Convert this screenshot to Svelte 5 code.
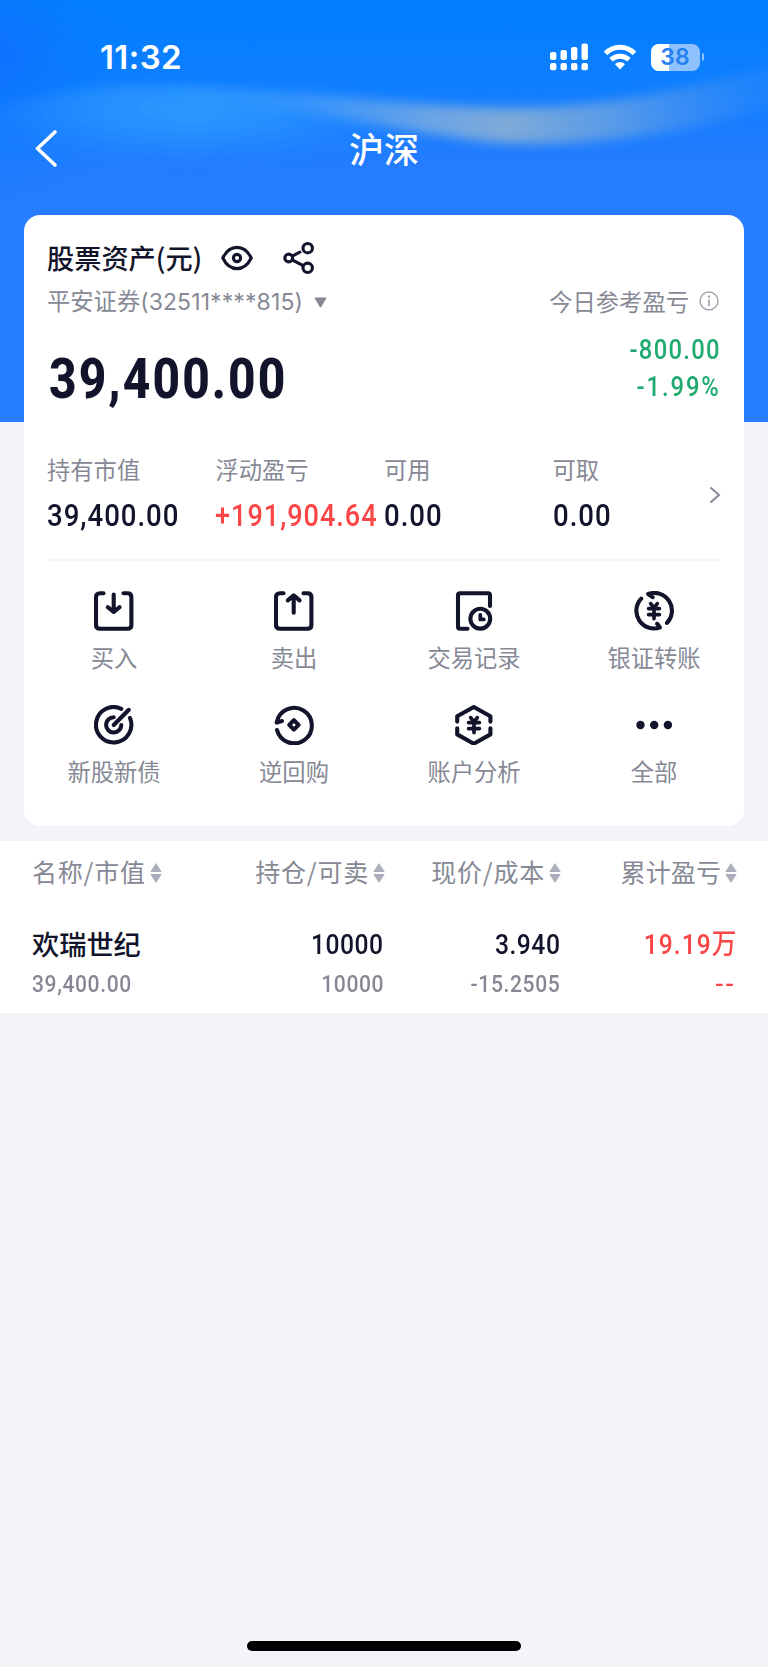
<script lang="ts">
  interface Stat {
    label: string
    value: string
    up?: boolean
  }

  const stats: Stat[] = [
    { label: '持有市值', value: '39,400.00' },
    { label: '浮动盈亏', value: '+191,904.64', up: true },
    { label: '可用', value: '0.00' },
    { label: '可取', value: '0.00' },
  ]

  const actions = [
    { icon: 'buy', label: '买入' },
    { icon: 'sell', label: '卖出' },
    { icon: 'records', label: '交易记录' },
    { icon: 'transfer', label: '银证转账' },
    { icon: 'ipo', label: '新股新债' },
    { icon: 'repo', label: '逆回购' },
    { icon: 'analysis', label: '账户分析' },
    { icon: 'more', label: '全部' },
  ]

  const columns = ['名称/市值', '持仓/可卖', '现价/成本', '累计盈亏']

  const holdings = [
    {
      name: '欢瑞世纪',
      marketValue: '39,400.00',
      position: '10000',
      sellable: '10000',
      price: '3.940',
      cost: '-15.2505',
      profit: '19.19',
      unit: '万',
      profitRate: '--',
    },
  ]

  const battery = 38
</script>

{#snippet yuan()}
  <path class="thin" d="M16.7 12.6L20 17L23.3 12.6M14.6 17.6H25.4M14.6 23.6H25.4M20 17V27.6" />
{/snippet}

<div class="page">
  <header class="hero">
    <!-- Soft light wave behind the nav bar -->
    <svg class="wave" width="768" height="422" viewBox="0 0 768 422">
      <defs>
        <linearGradient id="base" x1="0" y1="0" x2="0" y2="1">
          <stop offset="0" stop-color="#007fff" />
          <stop offset="0.2" stop-color="#0e7eff" />
          <stop offset="0.4" stop-color="#257cff" />
          <stop offset="1" stop-color="#277dff" />
        </linearGradient>
        <radialGradient id="corner" gradientUnits="userSpaceOnUse" cx="0" cy="55" r="150">
          <stop offset="0" stop-color="#0f70ff" stop-opacity="0.9" />
          <stop offset="1" stop-color="#057eff" stop-opacity="0" />
        </radialGradient>
        <radialGradient id="glow" gradientUnits="userSpaceOnUse" cx="0" cy="0" r="1" gradientTransform="translate(190 108) scale(250 66)">
          <stop offset="0" stop-color="#2e9aff" />
          <stop offset="0.4" stop-color="#2893ff" stop-opacity="0.8" />
          <stop offset="1" stop-color="#1e82ff" stop-opacity="0" />
        </radialGradient>
        <linearGradient id="band" gradientUnits="userSpaceOnUse" x1="150" y1="0" x2="768" y2="0">
          <stop offset="0" stop-color="#2f9cff" stop-opacity="0" />
          <stop offset="0.25" stop-color="#429bfb" stop-opacity="0.75" />
          <stop offset="0.45" stop-color="#6aa4e6" />
          <stop offset="0.58" stop-color="#7eaad8" />
          <stop offset="0.75" stop-color="#5f9ee6" stop-opacity="0.9" />
          <stop offset="1" stop-color="#2d89fa" stop-opacity="0.4" />
        </linearGradient>
        <filter id="blur" x="-20%" y="-50%" width="140%" height="200%"><feGaussianBlur stdDeviation="5.5" /></filter>
      </defs>
      <rect width="768" height="422" fill="url(#base)" />
      <rect width="160" height="210" fill="url(#corner)" />
      <path d="M-30 116C50 88 120 82 190 86C270 92 350 118 450 146V200H-30Z" fill="url(#glow)" filter="url(#blur)" />
      <path d="M150 88C280 82 370 106 510 108C610 108 690 88 790 62V98C710 130 590 150 490 142C370 128 270 100 150 92Z" fill="url(#band)" filter="url(#blur)" />
    </svg>

    <div class="status-bar">
      <span class="clock">11:32</span>
      <div class="status-icons">
        <svg width="38" height="28" viewBox="0 0 38 28" fill="#fff">
          <rect x="0" y="9" width="6.4" height="8" rx="2" />
          <rect x="10.5" y="7" width="6.4" height="10" rx="2" />
          <rect x="21" y="4" width="6.4" height="13" rx="2" />
          <rect x="31.5" y="0.5" width="6.4" height="16.5" rx="2" />
          <rect x="0" y="20" width="6.4" height="7.2" rx="2" />
          <rect x="10.5" y="20" width="6.4" height="7.2" rx="2" />
          <rect x="21" y="20" width="6.4" height="7.2" rx="2" />
          <rect x="31.5" y="20" width="6.4" height="7.2" rx="2" />
        </svg>
        <svg class="wifi" width="32" height="26" viewBox="0 0 32 26" fill="none" stroke="#fff" stroke-width="5">
          <path d="M1.6 9.4C9.6 1.2 22.4 1.2 30.4 9.4" />
          <path d="M7 15.8C12.2 10.9 19.8 10.9 25 15.8" />
          <path d="M11 20.2C13.8 17.2 18.2 17.2 21 20.2L16 25.6Z" fill="#fff" stroke="none" />
        </svg>
        <div class="battery">
          <div class="battery-body">
            <div class="battery-level" style="width: {battery}%"></div>
            <span class="battery-text">{battery}</span>
          </div>
          <div class="battery-cap"></div>
        </div>
      </div>
    </div>

    <nav class="nav">
      <button class="back" type="button" aria-label="返回">
        <svg width="24" height="38" viewBox="0 0 24 38" fill="none" stroke="#fff" stroke-width="3.6" stroke-linecap="round" stroke-linejoin="round">
          <polyline points="21 3 3.5 19.5 21 36" />
        </svg>
      </button>
      <h1>沪深</h1>
      <span class="nav-space"></span>
    </nav>
  </header>

  <section class="card">
    <div class="asset-title">
      <span>股票资产(元)</span>
      <svg class="eye" width="32" height="26" viewBox="0 0 32 26" fill="none" stroke="currentColor" stroke-width="3.1">
        <path d="M1.8 13C5.2 6 10.2 2.4 16 2.4S26.8 6 30.2 13C26.8 20 21.8 23.6 16 23.6S5.2 20 1.8 13Z" stroke-linejoin="round" />
        <circle cx="16" cy="13" r="3.6" />
      </svg>
      <svg class="share" width="32" height="34" viewBox="0 0 32 34" fill="none" stroke="currentColor" stroke-width="3.1">
        <circle cx="5.7" cy="17" r="3.9" />
        <circle cx="24.7" cy="7.2" r="4.7" />
        <circle cx="24.7" cy="26.8" r="4.7" />
        <path d="M9.2 15.2L18 10.5M9.2 18.9L20.6 24.9" />
      </svg>
    </div>

    <div class="account-row">
      <span>平安证券<span class="account-no">(32511****815)</span></span>
      <svg class="caret" width="13" height="11" viewBox="0 0 13 11" fill="currentColor">
        <path d="M1.2 0.5H11.8Q12.6 0.6 12.2 1.5L7.2 10Q6.5 10.8 5.8 10L0.8 1.5Q0.4 0.6 1.2 0.5Z" />
      </svg>
      <span class="today-label">今日参考盈亏</span>
      <svg class="info" width="20" height="20" viewBox="0 0 20 20" fill="none" stroke="currentColor" stroke-width="1.4">
        <circle cx="10" cy="10" r="9" />
        <path d="M10 8.5V15" stroke-width="1.8" />
        <circle cx="10" cy="5.6" r="1.2" fill="currentColor" stroke="none" />
      </svg>
    </div>

    <div class="total-row">
      <span class="total">39,400.00</span>
      <div class="today">
        <span>-800.00</span>
        <span class="rate">-1.99%</span>
      </div>
    </div>

    <div class="stats">
      {#each stats as stat}
        <div class="stat">
          <span class="stat-label">{stat.label}</span>
          <span class="stat-value" class:up={stat.up}>{stat.value}</span>
        </div>
      {/each}
      <svg class="chevron" width="12" height="18" viewBox="0 0 12 18" fill="none" stroke="currentColor" stroke-width="2">
        <polyline points="1.5 1.5 10 9 1.5 16.5" />
      </svg>
    </div>

    <div class="actions">
      {#each actions as action}
        <div class="action">
          <svg width="40" height="40" viewBox="0 0 40 40" fill="none" stroke="currentColor" stroke-width="4.1" stroke-linecap="round" stroke-linejoin="round">
            {#if action.icon === 'buy'}
              <path d="M9.5 2.2H6Q2 2.2 2 6V34Q2 37.7 6 37.7H33.5Q37.4 37.7 37.4 34V6Q37.4 2.2 33.5 2.2H29.5" />
              <path d="M19.7 3.5V21M13.8 16.2L19.7 21L25.6 16.2" />
            {:else if action.icon === 'sell'}
              <path d="M9.5 2.2H6Q2 2.2 2 6V34Q2 37.7 6 37.7H33.5Q37.4 37.7 37.4 34V6Q37.4 2.2 33.5 2.2H29.5" />
              <path d="M19.7 4.5V21.8M13.8 9.4L19.7 4.4L25.6 9.4" />
            {:else if action.icon === 'records'}
              <path d="M36 15V4.2Q36 2.2 34 2.2H6Q4 2.2 4 4.2V35.7Q4 37.7 6 37.7H13.5" />
              <circle cx="26.3" cy="27.7" r="9.9" />
              <path class="thin" d="M26.3 23.8V28.4H29.8" />
            {:else if action.icon === 'transfer'}
              <path d="M7.2 7.6A17.7 17.7 0 0 0 25.8 36.5L23.2 32.8" />
              <path d="M33 31.9A17.7 17.7 0 0 0 14.2 3L18.6 6.2" />
              {@render yuan()}
            {:else if action.icon === 'ipo'}
              <path d="M27.3 3.8A17.7 17.7 0 1 0 36 13" />
              <path d="M19.7 12.3A7.6 7.6 0 1 0 27.3 20" />
              <path d="M19.7 20L34.8 4.8" />
            {:else if action.icon === 'repo'}
              <path d="M3 25A17.7 17.7 0 1 0 2.7 17.6L8 16" />
              <path d="M19.9 15.2L24.6 19.9L19.9 24.6L15.2 19.9Z" />
            {:else if action.icon === 'analysis'}
              <path d="M3.2 16.6V11.3L19.8 2L36.4 11.3V16.6M3.2 23.2V29.4L19.8 38.7L36.4 29.4V23.2" />
              {@render yuan()}
            {:else}
              <g fill="currentColor" stroke="none">
                <circle cx="6.5" cy="20" r="4.2" />
                <circle cx="20.2" cy="20" r="4.2" />
                <circle cx="33.9" cy="20" r="4.2" />
              </g>
            {/if}
          </svg>
          <span>{action.label}</span>
        </div>
      {/each}
    </div>
  </section>

  <section class="holdings">
    <div class="row head">
      {#each columns as column}
        <span class="cell">
          {column}
          <svg class="sort" width="12" height="20" viewBox="0 0 12 20" fill="currentColor">
            <path d="M6 0L11.8 9H0.2ZM6 20L11.8 11H0.2Z" />
          </svg>
        </span>
      {/each}
    </div>
    {#each holdings as item}
      <div class="row body">
        <div class="cell stack">
          <span class="name">{item.name}</span>
          <span class="sub">{item.marketValue}</span>
        </div>
        <div class="cell stack">
          <span class="main">{item.position}</span>
          <span class="sub">{item.sellable}</span>
        </div>
        <div class="cell stack">
          <span class="main">{item.price}</span>
          <span class="sub">{item.cost}</span>
        </div>
        <div class="cell stack up">
          <span class="main profit">{item.profit}<span class="unit">{item.unit}</span></span>
          <span class="sub rate">{item.profitRate}</span>
        </div>
      </div>
    {/each}
  </section>

  <div class="home-indicator"></div>
</div>

<style>
  :global(body) {
    background: #f3f4f9;
  }

  .page {
    --ink: #11142a;
    --muted: #868995;
    --red: #fa4646;
    --green: #20aa70;
    --num: Roboto, 'Liberation Sans', sans-serif;
    display: flex;
    flex-direction: column;
    width: 768px;
    height: 1667px;
    overflow: hidden;
    color: var(--ink);
    background: #f3f4f9;
    font-family: 'Noto Sans CJK SC', sans-serif;
  }

  .hero {
    position: relative;
    flex-shrink: 0;
    height: 422px;
    color: #fff;
  }

  /* Decorative layer under the header content */
  .wave {
    position: absolute;
    inset: 0;
  }

  .status-bar {
    position: relative;
    display: flex;
    align-items: center;
    justify-content: space-between;
    padding: 39px 65px 0 100px;
    height: 36px;
  }

  .clock {
    font: 600 33px/36px Inter, sans-serif;
    letter-spacing: 0.4px;
  }

  .status-icons {
    display: flex;
    align-items: center;
    margin-right: -1px;
  }

  .wifi {
    margin-left: 16px;
  }

  .battery {
    display: flex;
    align-items: center;
    gap: 2px;
    margin-left: 15px;
  }

  .battery-body {
    position: relative;
    width: 49px;
    height: 27px;
    border-radius: 8px;
    overflow: hidden;
    background: #8fc1ff;
  }

  .battery-level {
    height: 100%;
    background: #fff;
  }

  .battery-text {
    position: absolute;
    inset: 0;
    font: 600 23px/27px Inter, sans-serif;
    text-align: center;
    color: #2481f2;
  }

  .battery-cap {
    width: 2.5px;
    height: 8px;
    border-radius: 0 3px 3px 0;
    background: #8fc1ff;
  }

  .nav {
    position: relative;
    display: flex;
    align-items: center;
    justify-content: space-between;
    padding: 0 34px;
    margin-top: 48px;
    height: 50px;
  }

  .back {
    display: flex;
    padding: 0;
    border: none;
    background: none;
  }

  .nav h1 {
    margin: -1px 0 0;
    font-size: 35px;
    font-weight: 500;
    line-height: 50px;
  }

  .nav-space {
    width: 24px;
  }

  .card {
    position: relative;
    flex-shrink: 0;
    box-sizing: border-box;
    width: 720px;
    height: 611px;
    margin: -207px 24px 0;
    padding-top: 25px;
    border-radius: 16px;
    background: #fff;
  }

  .asset-title {
    display: flex;
    align-items: center;
    height: 36px;
    padding-left: 23px;
    font-size: 27.2px;
    font-weight: 500;
    line-height: 36px;
  }

  .asset-title span {
    margin-top: -2px;
  }

  .eye {
    margin-left: 19px;
  }

  .share {
    margin-left: 30px;
  }

  .account-row {
    display: flex;
    align-items: center;
    height: 32px;
    margin-top: 9px;
    padding: 0 25px 0 23px;
    font-size: 23.3px;
    line-height: 32px;
    color: var(--muted);
  }

  .account-no {
    font-family: Inter, sans-serif;
    font-size: 23px;
    letter-spacing: 0.1px;
  }

  .caret {
    margin-left: 11px;
    margin-top: 2px;
  }

  .today-label {
    margin-left: auto;
  }

  .info {
    margin-left: 10px;
    color: #a3a5b0;
  }

  .total-row {
    display: flex;
    justify-content: space-between;
    height: 80px;
    margin-top: 13px;
    padding: 0 23px 0 25px;
    font-family: var(--num);
  }

  /* Figures are squeezed to a narrow, evenly spaced numeral style */
  .total {
    font-size: 55px;
    font-weight: 800;
    line-height: 98px;
    letter-spacing: 2.4px;
    transform: scaleX(0.87);
    transform-origin: left;
  }

  .today {
    display: flex;
    flex-direction: column;
    align-items: flex-end;
    padding-top: 2px;
    font-size: 27px;
    font-weight: 500;
    line-height: 37px;
    color: var(--green);
  }

  .today span {
    letter-spacing: 1.5px;
    transform: scaleX(0.88);
    transform-origin: right;
  }

  .today .rate {
    letter-spacing: 2.2px;
  }

  .stats {
    position: relative;
    display: flex;
    height: 107px;
    margin: 42px 23px 0;
    border-bottom: 2px solid #f5f6f9;
  }

  .stat {
    display: flex;
    flex-direction: column;
    align-items: flex-start;
    width: 168.6px;
    white-space: nowrap;
  }

  .stat-label {
    font-size: 23.3px;
    line-height: 34px;
    color: var(--muted);
  }

  .stat-value {
    margin-top: 10px;
    font: 500 31px/40px var(--num);
    letter-spacing: 1.1px;
    transform: scaleX(0.89);
    transform-origin: left;
  }

  .up,
  .stat-value.up {
    color: var(--red);
  }

  .stat-value.up {
    transform: scaleX(0.875);
  }

  /* Sits over the right end of the last stat column */
  .chevron {
    position: absolute;
    right: 0;
    top: 34px;
    color: var(--muted);
  }

  .actions {
    display: grid;
    grid-template-columns: repeat(4, 180px);
    grid-auto-rows: 113.5px;
    padding-top: 30px;
  }

  .action {
    display: flex;
    flex-direction: column;
    align-items: center;
    font-size: 23.3px;
    line-height: 34px;
    color: var(--ink);
  }

  .action span {
    margin-top: 9px;
    color: var(--muted);
  }

  .thin {
    stroke-width: 3.7;
  }

  .holdings {
    flex-shrink: 0;
    box-sizing: border-box;
    height: 172px;
    margin-top: 15px;
    padding: 0 31px 0 32px;
    background: #fff;
  }

  .row {
    display: grid;
    grid-template-columns: 177px 176px 176px 176px;
  }

  .cell {
    display: flex;
    justify-content: flex-end;
  }

  .cell:first-child {
    justify-content: flex-start;
  }

  .head .cell {
    align-items: center;
    gap: 4px;
    height: 60px;
    font-size: 25px;
    letter-spacing: 0.8px;
    color: var(--muted);
    white-space: nowrap;
  }

  .head .cell:last-child {
    letter-spacing: 0.1px;
  }

  .sort {
    margin-top: 3px;
    color: #abadba;
  }

  .stack {
    flex-direction: column;
    align-items: flex-end;
    padding-right: 1px;
  }

  .stack:first-child {
    align-items: flex-start;
  }

  .body {
    padding-top: 24px;
  }

  .name {
    margin-top: -2px;
    padding-bottom: 2px;
    font-size: 27.2px;
    font-weight: 500;
    line-height: 40px;
  }

  .main {
    font: 500 28px/40px var(--num);
    letter-spacing: 0.6px;
    transform: scaleX(0.88);
    transform-origin: right;
  }

  .profit {
    letter-spacing: 1.2px;
  }

  .unit {
    font-family: 'Noto Sans CJK SC', sans-serif;
    font-size: 28px;
    line-height: 1;
    letter-spacing: 0;
  }

  .sub {
    font: 500 24.5px/38px var(--num);
    letter-spacing: 0.7px;
    color: var(--muted);
    transform: scaleX(0.86);
    transform-origin: right;
  }

  .stack:first-child .sub {
    transform-origin: left;
  }

  .up .sub {
    color: var(--red);
  }

  .up .rate {
    letter-spacing: 1.5px;
    transform: scaleX(1.05);
  }

  .home-indicator {
    width: 274px;
    height: 10px;
    margin: auto auto 16px;
    border-radius: 5px;
    background: #000;
  }
</style>
